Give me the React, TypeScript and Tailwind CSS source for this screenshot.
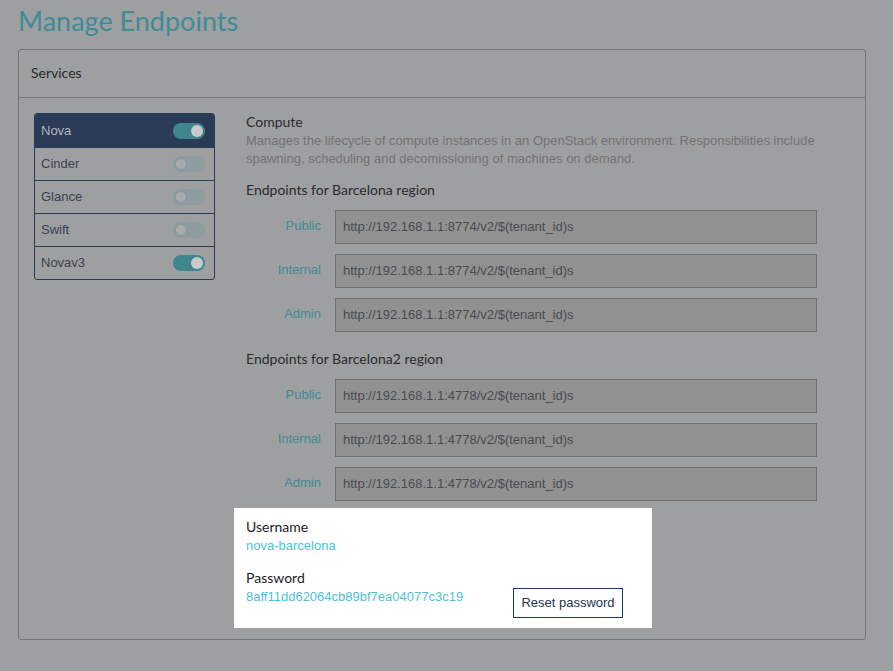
import { useState } from "react";

type Service = { name: string; enabled: boolean };

const services: Service[] = [
  { name: "Nova", enabled: true },
  { name: "Cinder", enabled: false },
  { name: "Glance", enabled: false },
  { name: "Swift", enabled: false },
  { name: "Novav3", enabled: true },
];

const regions = [
  { name: "Barcelona", port: "8774" },
  { name: "Barcelona2", port: "4778" },
];

const heading = "font-['Lato',sans-serif] text-[14px] leading-[18px]";

const Toggle = ({ on }: { on: boolean }) => (
  <span
    className={
      on
        ? "flex h-[16px] w-[32px] items-center justify-end rounded-full bg-[#3f868f] pr-[2px]"
        : "flex h-[16px] w-[32px] items-center justify-start rounded-full bg-[#8e9ca0] pl-[2px]"
    }
  >
    <span
      className={
        on
          ? "h-[12px] w-[12px] rounded-full bg-[#c9c9c9]"
          : "h-[12px] w-[12px] rounded-full border border-[#86979b] bg-[#a8abac]"
      }
    />
  </span>
);

const EndpointRow = ({ label, url }: { label: string; url: string }) => (
  <div className="flex items-start">
    <span className="w-[75px] pt-[6px] text-right text-[13px] text-[#3f8b96]">
      {label}
    </span>
    <div className="ml-[14px] flex h-[34px] w-[482px] items-center border border-[#707071] bg-[#919192] px-[7px] text-[13px] text-[#4a4b4e]">
      {url}
    </div>
  </div>
);

export default function App() {
  const [selected, setSelected] = useState("Nova");

  return (
    <div className="min-h-screen bg-[#9e9fa0] px-[18px] font-['Liberation_Sans',Arial,sans-serif]">
      <h1 className="h-[49px] pt-[2px] font-['Lato',sans-serif] text-[27px] font-normal leading-[38px] text-[#3f8b96]">
        Manage Endpoints
      </h1>

      <div className="h-[591px] w-[848px] rounded-[3px] border border-[#757576]">
        <div className="flex h-[48px] items-center border-b border-[#757576] px-3 pb-[3px] font-['Lato',sans-serif] text-[14px] text-[#2b2b2d]">
          Services
        </div>

        <div className="flex pl-[15px] pt-[15px]">
          <div className="w-[181px] self-start overflow-hidden rounded-[3px] border border-[#2a3b57]">
            {services.map((s, i) => (
              <button
                key={s.name}
                onClick={() => setSelected(s.name)}
                className={
                  (selected === s.name
                    ? "bg-[#2a3b57] text-[#b3b7bf] "
                    : "text-[#3a4157] ") +
                  (i > 0 ? "border-t border-[#2a3b57] " : "") +
                  "flex h-[33px] w-full items-center justify-between pl-[6px] pr-[9px] text-[13px]"
                }
              >
                {s.name}
                <Toggle on={s.enabled} />
              </button>
            ))}
          </div>

          <div className="ml-[31px] flex flex-col">
            <div className={heading + " text-[#2b2b2d]"}>Compute</div>
            <p className="mt-[1px] w-[575px] text-[13px] leading-[18px] text-[#727375]">
              Manages the lifecycle of compute instances in an OpenStack
              environment. Responsibilities include spawning, scheduling and
              decomissioning of machines on demand.
            </p>

            {regions.map((r, idx) => (
              <div key={r.name} className={idx === 0 ? "mt-[13px]" : "mt-[18px]"}>
                <div className={heading + " text-[#2b2b2d]"}>
                  Endpoints for {r.name} region
                </div>
                <div className="mt-[11px] flex flex-col gap-[10px]">
                  {["Public", "Internal", "Admin"].map((l) => (
                    <EndpointRow
                      key={l}
                      label={l}
                      url={`http://192.168.1.1:${r.port}/v2/$(tenant_id)s`}
                    />
                  ))}
                </div>
              </div>
            ))}

            <div className="-mx-3 mt-[7px] w-[418px] bg-white px-3 pb-[10px] pt-[10px]">
              <div className={heading + " text-[#1b1b1d]"}>Username</div>
              <div className="mt-[1px] text-[13px] leading-[18px] text-[#4fbfd6]">
                nova-barcelona
              </div>
              <div className="mt-[14px] flex items-start">
                <div className="w-[267px]">
                  <div className={heading + " text-[#1b1b1d]"}>Password</div>
                  <div className="mt-[1px] text-[13px] leading-[18px] text-[#4fbfd6]">
                    8aff11dd62064cb89bf7ea04077c3c19
                  </div>
                </div>
                <button className="mt-[19px] h-[30px] w-[110px] border border-[#1f3a68] text-[13px] text-[#243452]">
                  Reset password
                </button>
              </div>
            </div>
          </div>
        </div>
      </div>
    </div>
  );
}
